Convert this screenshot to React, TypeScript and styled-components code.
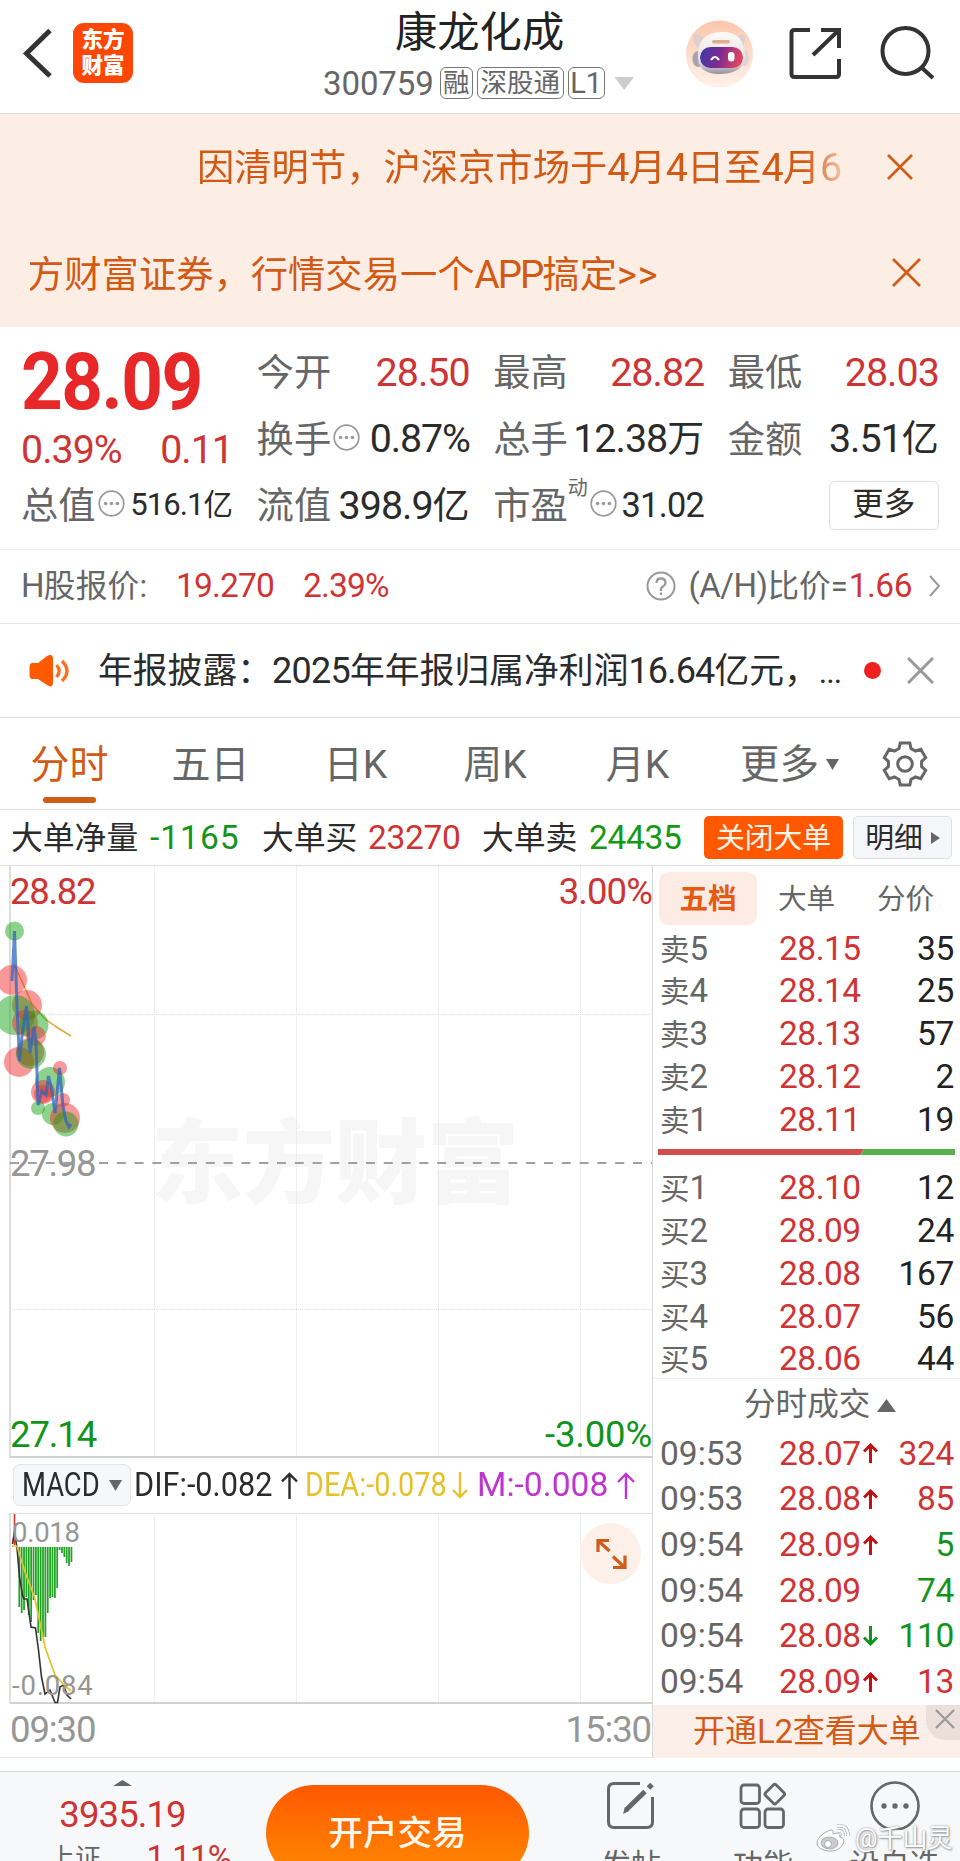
import React from "react";
import styled, { createGlobalStyle } from "styled-components";

const RED = "#cf3434";
const GREEN = "#12941a";
const INK = "#2b2b2b";
const GREY = "#666";
const ORANGE = "#d35a14";
const LINE = "#dcdfe0";

const GlobalStyle = createGlobalStyle`
  html, body { margin: 0; padding: 0; background: #fff; }
  * { box-sizing: border-box; }
  svg { flex: none; }
  body { font-family: Roboto, "Noto Sans CJK SC", sans-serif; color: ${INK}; }
`;

const Screen = styled.div`
  width: 960px;
  height: 1861px;
  overflow: hidden;
  background: #fff;
  display: flex;
  flex-direction: column;
  white-space: nowrap;
  line-height: 1;
`;

const Num = styled.span<{ $size: number; $color?: string; $ls?: number; $weight?: number }>`
  font-size: ${(p) => p.$size}px;
  color: ${(p) => p.$color ?? "inherit"};
  letter-spacing: ${(p) => p.$ls ?? -0.025}em;
  font-weight: ${(p) => p.$weight ?? 400};
`;

/* ---------- header ---------- */
const Header = styled.header`
  height: 114px;
  flex: none;
  border-bottom: 1px solid #dadada;
  display: grid;
  grid-template-columns: 73px 61px 552px 68px 103px 103px;
`;
const HeaderCell = styled.div<{ $pt?: number }>`
  display: flex;
  align-items: flex-start;
  padding-top: ${(p) => p.$pt ?? 0}px;
`;
const Logo = styled.div`
  width: 60px;
  height: 60px;
  margin-top: 23px;
  border-radius: 11px;
  background: #ff4704;
  color: #fff;
  font-size: 21.5px;
  font-weight: 900;
  line-height: 26px;
  padding-top: 4px;
  text-align: center;
  white-space: normal;
`;
const TitleBlock = styled.div`
  padding-left: 189px;
`;
const StockName = styled.h1`
  margin: 10px 0 0 72px;
  font-size: 42.3px;
  line-height: 46px;
  font-weight: 400;
  color: #222;
`;
const CodeRow = styled.div`
  display: flex;
  align-items: center;
  margin-top: 10px;
  height: 34px;
  color: ${GREY};
`;
const Tag = styled.span<{ $w: number; $ml: number }>`
  width: ${(p) => p.$w}px;
  margin-left: ${(p) => p.$ml}px;
  height: 32px;
  line-height: 30px;
  border: 1.4px solid #777;
  border-radius: 6px;
  font-size: 26.5px;
  text-align: center;
`;

/* ---------- banners ---------- */
const Banners = styled.section`
  height: 213px;
  flex: none;
  background: #fceee5;
  color: ${ORANGE};
  font-size: 37.3px;
`;
const Banner = styled.div<{ $h: number; $left: number }>`
  height: ${(p) => p.$h}px;
  padding-left: ${(p) => p.$left}px;
  padding-top: 3px;
  display: flex;
  align-items: center;
`;
const Marquee = styled.div<{ $w: number; $fade?: boolean; $shift?: number }>`
  width: ${(p) => p.$w}px;
  overflow: hidden;
  line-height: 50px;
  text-indent: ${(p) => p.$shift ?? 0}px;
  mask-image: ${(p) =>
    p.$fade ? "linear-gradient(90deg,#000 calc(100% - 46px),transparent calc(100% + 6px))" : "none"};
`;
const BannerClose = styled.span<{ $ml: number }>`
  margin-left: ${(p) => p.$ml}px;
`;

/* ---------- quote ---------- */
const Quote = styled.section`
  height: 223px;
  flex: none;
  border-bottom: 1px solid #ececec;
  padding: 12px 21px 0 21px;
  display: grid;
  grid-template-columns: 212px 213px 211px 211px;
  column-gap: 23.6px;
`;
const QuoteCol = styled.div`
  display: flex;
  flex-direction: column;
`;
const QuoteRow = styled.div<{ $h?: number }>`
  height: ${(p) => p.$h ?? 66.6}px;
  display: flex;
  align-items: center;
  justify-content: space-between;
  font-size: 37px;
  color: ${INK};
`;
const BigPrice = styled.strong`
  font-size: 80px;
  font-weight: 700;
  color: #e82828;
  letter-spacing: -0.02em;
  transform: scaleX(0.91);
  transform-origin: left;
`;
const Label = styled.span`
  font-size: 37.3px;
  color: ${GREY};
  display: flex;
  align-items: center;
  padding-top: 3px;
`;
const Sup = styled.sup`
  font-size: 20px;
  line-height: 20px;
  align-self: flex-start;
  margin: -10px 0 0 0;
`;
const Cap = styled.span`
  font-size: 29.5px;
`;
const MoreButton = styled.button`
  margin-left: auto;
  width: 110px;
  height: 49px;
  border: 1.3px solid #e0e0e0;
  border-radius: 6px;
  background: #fff;
  font: 400 31.5px/44px Roboto, "Noto Sans CJK SC", sans-serif;
  color: ${INK};
  padding: 0;
`;

const HRow = styled.section`
  height: 74px;
  flex: none;
  border-bottom: 1px solid #e8e8e8;
  display: flex;
  align-items: center;
  padding: 0 19px 1px 21px;
  font-size: 31.6px;
  color: ${GREY};
`;
const HLabel = styled.span`
  width: 155px;
  letter-spacing: 0.01em;
`;
const HChange = styled.span`
  margin-left: 29px;
`;
const Push = styled.span`
  margin-left: auto;
  display: flex;
  align-items: center;
`;
const Ratio = styled.span`
  margin: 0 1px 0 12px;
`;
const News = styled.section`
  height: 94px;
  flex: none;
  border-bottom: 1px solid #dcdcdc;
  display: flex;
  align-items: center;
  padding-left: 29px;
  font-size: 34.8px;
`;
const NewsText = styled.span`
  width: 746px;
  margin-left: 28px;
`;
const Dot = styled.i`
  width: 17px;
  height: 17px;
  border-radius: 50%;
  background: #ee2020;
  margin: 0 26px 0 20px;
`;

/* ---------- tabs ---------- */
const Tabs = styled.nav`
  height: 92px;
  flex: none;
  border-bottom: 1px solid ${LINE};
  display: grid;
  grid-template-columns: 139px 143px 147px 132px 153px 136px 110px;
`;
const Tab = styled.div<{ $active?: boolean }>`
  display: flex;
  flex-direction: column;
  align-items: center;
  font-size: 39px;
  line-height: 56px;
  padding-top: 19px;
  color: ${(p) => (p.$active ? ORANGE : GREY)};
  &::after {
    content: "";
    width: 53px;
    height: 5.5px;
    border-radius: 3px;
    margin-top: 4px;
    background: ${(p) => (p.$active ? ORANGE : "transparent")};
  }
`;
const MoreTab = styled.div`
  display: flex;
  align-items: center;
  font-size: 39.5px;
  line-height: 56px;
  color: ${GREY};
  padding: 2px 0 0 26px;
  gap: 7px;
`;
const Center = styled.div`
  display: flex;
  align-items: center;
  justify-content: center;
`;

const BigOrders = styled.section`
  height: 56px;
  flex: none;
  border-bottom: 1px solid ${LINE};
  display: grid;
  align-items: center;
  grid-template-columns: 139px 112px 106px 114px 107px 115px 149px 99px;
  padding-left: 11px;
  font-size: 31.8px;
`;
const OrderLabel = styled.span`
  padding-top: 3px;
`;
const OrderValue = styled(Num)`
  padding-top: 1px;
`;
const SmallButton = styled.button<{ $primary?: boolean }>`
  width: ${(p) => (p.$primary ? 139 : 99)}px;
  height: 43px;
  border-radius: 5px;
  padding: 1px 0 0;
  display: flex;
  align-items: center;
  justify-content: center;
  gap: 8px;
  border: ${(p) => (p.$primary ? "0" : "1px solid #dcdfe3")};
  background: ${(p) => (p.$primary ? "#ff5800" : "#f5f6f9")};
  color: ${(p) => (p.$primary ? "#fff4e8" : INK)};
  font: 400 28.8px/40px Roboto, "Noto Sans CJK SC", sans-serif;
`;

/* ---------- main ---------- */
const Main = styled.main`
  height: 892px;
  flex: none;
  display: grid;
  grid-template-columns: 653px 307px;
  border-bottom: 1px solid #e6e6e6;
`;
const ChartSide = styled.div`
  border-right: 1px solid #d8d8d8;
  display: flex;
  flex-direction: column;
`;
const Plot = styled.div<{ $h: number }>`
  height: ${(p) => p.$h}px;
  flex: none;
  display: grid;
  & > * { grid-area: 1 / 1; }
`;
const PlotLabels = styled.div<{ $pad: string }>`
  z-index: 1;
  display: flex;
  flex-direction: column;
  justify-content: space-between;
  padding: ${(p) => p.$pad};
`;
const PlotLine = styled.div`
  display: flex;
  justify-content: space-between;
  line-height: 36px;
`;
const Watermark = styled.div`
  align-self: start;
  margin: 244px 0 0 151px;
  font-size: 92px;
  line-height: 110px;
  font-weight: 900;
  color: #f6f6f6;
`;
const MacdRow = styled.div`
  height: 55px;
  flex: none;
  display: grid;
  align-items: center;
  grid-template-columns: 121px 147px 24px 147px 25px 140px 1fr;
  padding: 0 0 1px 13px;
`;
const MacdPicker = styled.div`
  width: 118px;
  height: 42px;
  border: 1px solid #e2e4e8;
  border-radius: 7px;
  background: #f6f7f9;
  display: flex;
  align-items: center;
  padding-left: 8px;
`;
const Squeeze = styled.span<{ $k: number; $w?: number; $color?: string }>`
  display: inline-block;
  width: ${(p) => (p.$w ? p.$w + "px" : "auto")};
  font-size: 33px;
  line-height: 40px;
  color: ${(p) => p.$color ?? INK};
  transform: scaleX(${(p) => p.$k});
  transform-origin: left;
`;
const TimeRow = styled.div`
  height: 53px;
  display: flex;
  align-items: center;
  justify-content: space-between;
  padding: 0 1px 0 10px;
  color: #969696;
`;
const ExpandButton = styled.div`
  z-index: 1;
  width: 61px;
  height: 61px;
  border-radius: 50%;
  background: #fdf0e8;
  margin: 10px 0 0 580px;
  display: flex;
  align-items: center;
  justify-content: center;
`;

/* ---------- order book ---------- */
const BookSide = styled.div`
  display: flex;
  flex-direction: column;
`;
const BookTabs = styled.div`
  height: 61px;
  flex: none;
  display: grid;
  grid-template-columns: 98px 99px 99px;
  padding: 6px 0 0 6px;
`;
const BookTab = styled.div<{ $active?: boolean }>`
  height: 53px;
  line-height: 54px;
  border-radius: 9px;
  text-align: center;
  font-size: 28.6px;
  font-weight: ${(p) => (p.$active ? 700 : 400)};
  color: ${(p) => (p.$active ? "#e65a12" : GREY)};
  background: ${(p) => (p.$active ? "#fdece3" : "transparent")};
`;
const BookRow = styled.div<{ $h: number }>`
  height: ${(p) => p.$h}px;
  flex: none;
  display: grid;
  align-items: center;
  grid-template-columns: 119px 84px 1fr;
  padding: 0 6px 0 7px;
  font-size: 29.5px;
  color: ${GREY};
`;
const Qty = styled.span<{ $color?: string }>`
  text-align: right;
  font-size: 33.5px;
  letter-spacing: -0.01em;
  color: ${(p) => p.$color ?? "#222"};
`;
const TickPrice = styled.span`
  display: flex;
  align-items: center;
  gap: 2px;
`;
const RatioBar = styled.svg`
  flex: none;
  margin: 8px 0 12px 5px;
  display: block;
`;
const TicksTitle = styled.div`
  height: 53px;
  flex: none;
  border-top: 1px solid #eee;
  margin-top: -3px;
  padding: 1px 0 0 91px;
  display: flex;
  align-items: center;
  gap: 7px;
  font-size: 31.6px;
  color: ${GREY};
`;
const L2Bar = styled.div`
  height: 53px;
  margin-top: auto;
  background: #fceee8;
  color: ${ORANGE};
  font-size: 32px;
  display: flex;
  align-items: center;
  padding-left: 40px;
`;
const L2Close = styled.span`
  width: 34px;
  height: 35px;
  align-self: flex-start;
  margin-left: auto;
  padding: 0 0 6px 4px;
  background: #ebdfd9;
  border-radius: 0 0 0 20px;
  display: flex;
  align-items: center;
  justify-content: center;
`;

/* ---------- bottom bar ---------- */
const BottomBar = styled.footer`
  position: relative;
  margin-top: 13px;
  height: 120px;
  flex: none;
  border-top: 1px solid #d6d8da;
  background: #f7f8fa;
  display: grid;
  grid-template-columns: 266px 263px 204px 60px 167px;
`;
const IndexCell = styled.div`
  display: flex;
  flex-direction: column;
  align-items: center;
  padding: 8px 21px 0 0;
`;
const IndexValue = styled.span`
  margin-top: 11px;
  font-size: 36.5px;
  letter-spacing: -0.025em;
  color: ${RED};
`;
const IndexRow = styled.div`
  display: flex;
  align-items: center;
  justify-content: space-between;
  width: 182px;
  height: 32px;
  margin: 8px 0 0 35px;
  font-size: 26px;
  color: ${GREY};
`;
const TradeButton = styled.button`
  width: 263px;
  height: 96px;
  margin-top: 13px;
  border: 0;
  border-radius: 48px;
  background: linear-gradient(#ff5800, #ff8c00);
  color: #fff8ec;
  font: 500 34.6px/40px Roboto, "Noto Sans CJK SC", sans-serif;
`;
const Action = styled.div<{ $pl?: number }>`
  display: flex;
  flex-direction: column;
  align-items: center;
  padding: 8px 0 0 ${(p) => p.$pl ?? 0}px;
  font-size: 30px;
  line-height: 36px;
  gap: 17px;
  color: ${GREY};
`;
const Credit = styled.div`
  position: absolute;
  left: 815px;
  top: 50px;
  display: flex;
  align-items: center;
  gap: 4px;
  font-size: 25px;
  line-height: 34px;
  color: #fff;
  text-shadow: 0 0 2px #8a8a8a, 1px 1px 2px #999;
`;

const Cross = ({ s, c, w = 2.6 }: { s: number; c: string; w?: number }) => (
  <svg width={s} height={s} viewBox={`0 0 ${s} ${s}`} stroke={c} strokeWidth={w}>
    <path d={`M1 1L${s - 1} ${s - 1}M${s - 1} 1L1 ${s - 1}`} />
  </svg>
);
const Tri = ({ w, h, c, dir }: { w: number; h: number; c: string; dir: "up" | "down" | "right" }) => (
  <svg width={w} height={h} fill={c}>
    <path
      d={
        dir === "up" ? `M0 ${h}L${w / 2} 0L${w} ${h}z` : dir === "down" ? `M0 0H${w}L${w / 2} ${h}z` : `M0 0L${w} ${h / 2}L0 ${h}z`
      }
    />
  </svg>
);
const InfoIcon = styled.svg`
  margin: -6px 0 0 2px;
`;
const Info = () => (
  <InfoIcon width="27" height="27" viewBox="0 0 27 27">
    <circle cx="13.5" cy="13.5" r="12.3" fill="none" stroke="#999" strokeWidth="1.7" />
    <g fill="#999">
      <circle cx="7.6" cy="13.5" r="1.8" />
      <circle cx="13.5" cy="13.5" r="1.8" />
      <circle cx="19.4" cy="13.5" r="1.8" />
    </g>
  </InfoIcon>
);
const Chevron = styled.svg`
  margin-left: 17px;
`;
const Arrow = ({ w, h, c, sw, down }: { w: number; h: number; c: string; sw: number; down?: boolean }) => (
  <svg width={w} height={h} fill="none" stroke={c} strokeWidth={sw}>
    <g transform={down ? `rotate(180 ${w / 2} ${h / 2})` : undefined}>
      <path d={`M${w / 2} ${h}V2M1 ${w / 2 + 1}L${w / 2} 2L${w - 1} ${w / 2 + 1}`} />
    </g>
  </svg>
);

const Robot = () => (
  <svg width="68" height="68" viewBox="0 0 68 68">
    <defs>
      <linearGradient id="halo" x1="0" y1="0" x2="0" y2="1">
        <stop offset="0" stopColor="#fcc7ab" />
        <stop offset="1" stopColor="#fff1ea" />
      </linearGradient>
      <linearGradient id="visor" x1="0" y1="0" x2="1" y2="0.15">
        <stop offset="0" stopColor="#3b3aa8" />
        <stop offset="0.5" stopColor="#7d2a93" />
        <stop offset="1" stopColor="#e0455f" />
      </linearGradient>
      <linearGradient id="shell" x1="0" y1="0" x2="0" y2="1">
        <stop offset="0" stopColor="#fffaf7" />
        <stop offset="0.7" stopColor="#e4e0e4" />
        <stop offset="1" stopColor="#96939f" />
      </linearGradient>
    </defs>
    <circle cx="33.500" cy="34" r="33.500" fill="url(#halo)" />
    <ellipse cx="12" cy="39" rx="5.500" ry="8" fill="#a9a3af" />
    <ellipse cx="59" cy="38" rx="4" ry="8" fill="#ded4d8" />
    <path d="M8 15q3-3 8 2l4 5-8 6q-6-5-4-13zM53 15q6-2 6 4l-2 10-9-6z" fill="#dccfcd" />
    <path d="M12 35Q12 13 35 12T59 35Q59 53 35 54T12 35z" fill="url(#shell)" />
    <rect x="26" y="20" width="18" height="3.500" rx="1.700" fill="#dfae8e" />
    <rect x="14" y="27" width="43" height="21" rx="10.500" fill="url(#visor)" />
    <path d="M25 40q4-6 8 0" stroke="#fff" strokeWidth="2.200" fill="none" />
    <rect x="42" y="32" width="6.500" height="9.500" rx="3" fill="#fff" />
  </svg>
);

const asks = [["卖5", "28.15", "35"], ["卖4", "28.14", "25"], ["卖3", "28.13", "57"], ["卖2", "28.12", "2"], ["卖1", "28.11", "19"]];
const bids = [["买1", "28.10", "12"], ["买2", "28.09", "24"], ["买3", "28.08", "167"], ["买4", "28.07", "56"], ["买5", "28.06", "44"]];
const ticks: [string, string, string, string, string][] = [
  ["09:53", "28.07", "up", "324", RED],
  ["09:53", "28.08", "up", "85", RED],
  ["09:54", "28.09", "up", "5", GREEN],
  ["09:54", "28.09", "", "74", GREEN],
  ["09:54", "28.08", "down", "110", GREEN],
  ["09:54", "28.09", "up", "13", RED],
];
const bubbles: [number, number, number, "r" | "g"][] = [
  [14.5, 65, 9.5, "g"], [12, 114, 15, "r"], [27, 139, 15, "r"], [15, 149, 20, "g"], [25, 157, 13, "r"],
  [34, 159, 14.5, "g"], [36, 170, 10, "r"], [19, 196, 15, "r"], [30, 186, 14, "r"], [31, 188, 15, "g"],
  [50, 216, 15, "g"], [60, 202, 7, "r"], [43, 226, 12, "r"], [43, 228, 9, "r"], [38, 242, 7, "g"],
  [53, 248, 11, "g"], [63, 234, 7, "r"], [65, 252, 15, "r"], [66, 258, 12.5, "g"],
];
const macdBars = [107, 113, 110, 97, 115, 122, 100, 95, 133, 141, 137, 137, 113, 98, 97, 98, 88, 50, 53, 57, 63, 66, 62];
const gridX = [154.5, 296.5, 438.5, 580.5];

const BookRows = ({ rows }: { rows: string[][] }) => (
  <>
    {rows.map(([n, p, q]) => (
      <BookRow key={n} $h={42.75}>
        <span>{n[0]}<Num $size={33} $ls={0}>{n[1]}</Num></span>
        <Num $size={33.5} $color={RED} $ls={-0.015}>{p}</Num>
        <Qty>{q}</Qty>
      </BookRow>
    ))}
  </>
);

export default function App() {
  return (
    <Screen>
      <GlobalStyle />
      <Header>
        <HeaderCell>
          <svg width="73" height="100" fill="none" stroke="#333" strokeWidth="5">
            <path d="M50 30.500L26.500 53.500L50 76" />
          </svg>
        </HeaderCell>
        <Logo>东方<br />财富</Logo>
        <TitleBlock>
          <StockName>康龙化成</StockName>
          <CodeRow>
            <Num $size={33} $ls={-0.003}>300759</Num>
            <Tag $w={33} $ml={6}>融</Tag>
            <Tag $w={87} $ml={4}>深股通</Tag>
            <Tag $w={37} $ml={4}><Num $size={29} $ls={0}>L1</Num></Tag>
            <svg width="30" height="20"><path d="M9.500 4H29L19.200 17z" fill="#ccc" /></svg>
          </CodeRow>
        </TitleBlock>
        <HeaderCell $pt={20}><Robot /></HeaderCell>
        <HeaderCell>
          <svg width="103" height="100" fill="none" stroke="#333" strokeWidth="4">
            <path d="M56 30H40.500Q37.500 30 37.500 33V74Q37.500 77 40.500 77H82Q85 77 85 74V59M67 30H85V48M85 30L59 55" />
          </svg>
        </HeaderCell>
        <HeaderCell>
          <svg width="103" height="100" fill="none" stroke="#333" strokeWidth="4">
            <circle cx="48.500" cy="51" r="23" />
            <path d="M64.500 67.500L76 78" />
          </svg>
        </HeaderCell>
      </Header>

      <Banners>
        <Banner $h={104} $left={197}>
          <Marquee $w={654} $fade>
            因清明节，沪深京市场于<Num $size={39.4}>4</Num>月<Num $size={39.4}>4</Num>日至<Num $size={39.4}>4</Num>月<Num $size={39.4}>6</Num>
          </Marquee>
          <BannerClose $ml={36}><Cross s={26} c={ORANGE} /></BannerClose>
        </Banner>
        <Banner $h={110} $left={30}>
          <Marquee $w={820} $shift={-3}>
            方财富证券，行情交易一个<Num $size={38.5} $ls={-0.05}>APP</Num>搞定<Num $size={38} $ls={0.02}>&gt;&gt;</Num>
          </Marquee>
          <BannerClose $ml={42}><Cross s={29} c={ORANGE} /></BannerClose>
        </Banner>
      </Banners>

      <Quote>
        <QuoteCol>
          <QuoteRow $h={86}><BigPrice>28.09</BigPrice></QuoteRow>
          <QuoteRow $h={50}>
            <Num $size={39.4} $color={RED}>0.39%</Num>
            <Num $size={39.4} $color={RED}>0.11</Num>
          </QuoteRow>
          <QuoteRow $h={60}>
            <Label>总值<Info /></Label>
            <Cap><Num $size={31} $ls={-0.03}>516.1</Num>亿</Cap>
          </QuoteRow>
        </QuoteCol>
        <QuoteCol>
          <QuoteRow><Label>今开</Label><Num $size={39.4} $color={RED}>28.50</Num></QuoteRow>
          <QuoteRow><Label>换手<Info /></Label><Num $size={39.4} $ls={-0.03}>0.87%</Num></QuoteRow>
          <QuoteRow><Label>流值</Label><span><Num $size={39.4}>398.9</Num>亿</span></QuoteRow>
        </QuoteCol>
        <QuoteCol>
          <QuoteRow><Label>最高</Label><Num $size={39.4} $color={RED}>28.82</Num></QuoteRow>
          <QuoteRow><Label>总手</Label><span><Num $size={39.4}>12.38</Num>万</span></QuoteRow>
          <QuoteRow><Label>市盈<Sup>动</Sup><Info /></Label><Num $size={34.3} $ls={-0.02}>31.02</Num></QuoteRow>
        </QuoteCol>
        <QuoteCol>
          <QuoteRow><Label>最低</Label><Num $size={39.4} $color={RED}>28.03</Num></QuoteRow>
          <QuoteRow><Label>金额</Label><span><Num $size={39.4}>3.51</Num>亿</span></QuoteRow>
          <QuoteRow><MoreButton>更多</MoreButton></QuoteRow>
        </QuoteCol>
      </Quote>

      <HRow>
        <HLabel><Num $size={33}>H</Num>股报价:</HLabel>
        <Num $size={33.5} $color={RED} $ls={-0.025}>19.270</Num>
        <HChange><Num $size={33.5} $color={RED}>2.39%</Num></HChange>
        <Push>
          <svg width="30" height="30" fill="none" stroke="#999" strokeWidth="2">
            <circle cx="15" cy="15" r="13.500" />
            <path d="M10.500 12Q10.500 7.500 15 7.500T19.500 12Q19.500 14 17 15.500T15 19V20M15 21.500V24" strokeWidth="2.300" />
          </svg>
          <Ratio><Num $size={33} $ls={-0.015}>(A/H)</Num>比价<Num $size={31} $ls={0}>=</Num></Ratio>
          <Num $size={33.5} $color={RED} $ls={-0.015}>1.66</Num>
          <Chevron width="12" height="22" fill="none" stroke="#999" strokeWidth="2"><path d="M1 1L10 11L1 21" /></Chevron>
        </Push>
      </HRow>

      <News>
        <svg width="41" height="34" viewBox="0 0 41 34">
          <path d="M3.500 9H9L18 2Q24-1 24 5V28Q24 35 18 31L9 25H3.500Q.5 25 .5 21V13Q.5 9 3.500 9z" fill="#ff5a00" />
          <path d="M27.500 11Q33 17 27.500 23M33 7Q43 17 33 27" stroke="#ff6d1c" strokeWidth="3.200" fill="none" />
        </svg>
        <NewsText>年报披露：<Num $size={36} $ls={-0.02}>2025</Num>年年报归属净利润<Num $size={36} $ls={-0.025}>16.64</Num>亿元，<Num $size={32} $ls={-0.03}>...</Num></NewsText>
        <Dot />
        <Cross s={27} c="#999" w={3} />
      </News>

      <Tabs>
        <Tab $active>分时</Tab>
        <Tab>五日</Tab>
        <Tab>日K</Tab>
        <Tab>周K</Tab>
        <Tab>月K</Tab>
        <MoreTab>更多<Tri w={13} h={11} c={GREY} dir="down" /></MoreTab>
        <Center>
          <svg width="48" height="48" viewBox="-24 -24 48 48" fill="none" stroke={GREY} strokeWidth="3">
            <path d="M-4.800-21H4.800L6-15.500L10.500-13L15.800-14.700L20.700-6.300L16.600-2.600V2.600L20.700 6.300L15.800 14.700L10.500 13L6 15.500L4.800 21H-4.800L-6 15.500L-10.500 13L-15.800 14.700L-20.700 6.300L-16.600 2.600V-2.600L-20.700-6.300L-15.800-14.700L-10.500-13L-6-15.500z" />
            <circle r="7.300" />
          </svg>
        </Center>
      </Tabs>

      <BigOrders>
        <OrderLabel>大单净量</OrderLabel><OrderValue $size={33.5} $color={GREEN} $ls={0.03}>-1165</OrderValue>
        <OrderLabel>大单买</OrderLabel><OrderValue $size={33.5} $color={RED} $ls={-0.01}>23270</OrderValue>
        <OrderLabel>大单卖</OrderLabel><OrderValue $size={33.5} $color="#129a12" $ls={-0.01}>24435</OrderValue>
        <SmallButton $primary>关闭大单</SmallButton>
        <SmallButton>明细<Tri w={9} h={12} c={GREY} dir="right" /></SmallButton>
      </BigOrders>

      <Main>
        <ChartSide>
          <Plot $h={592}>
            <Watermark>东方财富</Watermark>
            <svg width="652" height="592" fill="none">
              <g stroke="#dde1e3" strokeWidth="1" strokeDasharray="1 1">
                {gridX.map((x) => <path key={x} d={`M${x} 0V591`} />)}
                <path d="M10 148.500H652M10 443.500H652" />
              </g>
              <path d="M10 0V592" stroke="#dedede" strokeWidth="2" />
              <path d="M10 591H652" stroke="#d2d2d2" strokeWidth="2" />
              <path d="M10 297H652" stroke="#a0a0a0" strokeWidth="2" strokeDasharray="9 8.800" />
              <path d="M14 98L24 120L32 138L45 153L58 162L71 170" stroke="#e0a838" strokeWidth="1.500" />
              {bubbles.map(([x, y, r, k], i) => (
                <circle key={i} cx={x} cy={y} r={r} fill={k === "r" ? "#f02828" : "#10a010"} fillOpacity={0.48} />
              ))}
              <path d="M12 115L14.500 65L17 140L19.500 195L22 170L26.500 140L30 187L34 161L36 175L38 239L42 225L46 229L48.500 210L52 225L55 247L59.500 202L63 240L66 255L69 261L71 258" stroke="#2f64c0" strokeOpacity="0.75" strokeWidth="3" />
            </svg>
            <PlotLabels $pad="8px 0 5px 10px">
              <PlotLine><Num $size={36.5} $color={RED} $ls={-0.035}>28.82</Num><Num $size={36.5} $color={RED} $ls={-0.025}>3.00%</Num></PlotLine>
              <PlotLine><Num $size={36.5} $color="#969696" $ls={-0.035}>27.98</Num></PlotLine>
              <PlotLine><Num $size={36.5} $color={GREEN} $ls={-0.03}>27.14</Num><Num $size={36.5} $color={GREEN} $ls={-0.005}>-3.00%</Num></PlotLine>
            </PlotLabels>
          </Plot>
          <MacdRow>
            <MacdPicker><Squeeze $k={0.83} $w={87}>MACD</Squeeze><Tri w={13} h={11} c={GREY} dir="down" /></MacdPicker>
            <Squeeze $k={0.93}>DIF:-0.082</Squeeze><Arrow w={17} h={27} c={INK} sw={2.4} />
            <Squeeze $k={0.875} $color="#e6c12c">DEA:-0.078</Squeeze><Arrow w={16} h={27} c="#e6c12c" sw={2.4} down />
            <Squeeze $k={1.02} $color="#c035cf">M:-0.008</Squeeze><Arrow w={18} h={27} c="#c035cf" sw={2.4} />
          </MacdRow>
          <Plot $h={191}>
            <svg width="652" height="191" fill="none">
              <g stroke="#dde1e3" strokeWidth="1" strokeDasharray="1 1">
                {gridX.map((x) => <path key={x} d={`M${x} 0V190`} />)}
              </g>
              <path d="M10 .5H652" stroke="#dedede" />
              <path d="M10 0V190" stroke="#dedede" strokeWidth="2" />
              <path d="M10 190H652" stroke="#d2d2d2" strokeWidth="2" />
              <g stroke="#1fa222" strokeWidth="1.750">
                {macdBars.map((v, i) => <path key={i} d={`M${19.3 + i * 2.37} 34V${v - 13}`} />)}
              </g>
              <path d="M14.500 1V32" stroke="#e03030" strokeWidth="1.600" />
              <path d="M12.500 31L14.500 18L17 35L19.500 64L22.500 82L24 86H27L31 114L35.500 115L38.500 137L41.500 164L45 181L50 177L55 189.500H57.500L60 174L63.500 172L67 182L71 186" stroke="#333" strokeWidth="1.600" />
              <path d="M12 33L17 33L25 59L34.500 84L40 110L45 134L55 162L63 171L71 178" stroke="#e3c22a" strokeWidth="1.700" />
            </svg>
            <PlotLabels $pad="2px 0 0 12px">
              <PlotLine><Num $size={27.5} $color="#969696" $ls={-0.01}>0.018</Num></PlotLine>
              <PlotLine><Num $size={27.5} $color="#969696" $ls={0.03}>-0.084</Num></PlotLine>
            </PlotLabels>
            <ExpandButton>
              <svg width="34" height="34" fill="none" stroke="#cf5c18" strokeWidth="3.200">
                <path d="M15 3.500H4V15M4.500 4L15.500 14M19 19.500L30 30M31 18.500V30.500H19" />
              </svg>
            </ExpandButton>
          </Plot>
          <TimeRow><Num $size={36.5} $ls={-0.03}>09:30</Num><Num $size={36.5} $ls={-0.03}>15:30</Num></TimeRow>
        </ChartSide>

        <BookSide>
          <BookTabs>
            <BookTab $active>五档</BookTab>
            <BookTab>大单</BookTab>
            <BookTab>分价</BookTab>
          </BookTabs>
          <BookRows rows={asks} />
          <RatioBar width="297" height="6">
            <path d="M0 0H206L202 6H0z" fill="#d44c4c" />
            <path d="M206 0H297V6H202z" fill="#5cb04c" />
          </RatioBar>
          <BookRows rows={bids} />
          <TicksTitle>分时成交<Tri w={19} h={13} c={GREY} dir="up" /></TicksTitle>
          {ticks.map(([t, p, d, q, c], i) => (
            <BookRow key={i} $h={45.7}>
              <Num $size={33.5} $ls={0}>{t}</Num>
              <TickPrice>
                <Num $size={33.5} $color={RED} $ls={-0.015}>{p}</Num>
                {d && <Arrow w={15} h={20} c={d === "up" ? "#c01010" : GREEN} sw={3} down={d === "down"} />}
              </TickPrice>
              <Qty $color={c}>{q}</Qty>
            </BookRow>
          ))}
          <L2Bar>开通<Num $size={33} $ls={-0.01}>L2</Num>查看大单<L2Close><Cross s={20} c="#999" w={2.2} /></L2Close></L2Bar>
        </BookSide>
      </Main>

      <BottomBar>
        <IndexCell>
          <Tri w={19} h={6} c={GREY} dir="up" />
          <IndexValue>3935.19</IndexValue>
          <IndexRow><span>上证</span><Num $size={33} $color={RED}>1.11%</Num></IndexRow>
        </IndexCell>
        <TradeButton>开户交易</TradeButton>
        <Action>
          <svg width="50" height="50" viewBox="0 0 50 50" fill="none" stroke={GREY} strokeWidth="3">
            <path d="M34 3.500H8Q2.500 3.500 2.500 9V42Q2.500 47.500 8 47.500H41Q46.500 47.500 46.500 42V17" />
            <path d="M20 30L39 11.500M42.500 8L46 4.500" strokeWidth="5" />
            <path d="M17 34L19 27L23 31z" fill={GREY} stroke="none" />
          </svg>
          <span>发帖</span>
        </Action>
        <Action>
          <svg width="50" height="50" viewBox="0 0 50 50" fill="none" stroke={GREY} strokeWidth="2.800">
            <rect x="3" y="5" width="18.500" height="18.500" rx="3" />
            <rect x="3" y="29" width="18.500" height="18.500" rx="3" />
            <rect x="27" y="29" width="18.500" height="18.500" rx="3" />
            <rect x="29.300" y="6.600" width="15" height="15" rx="2" transform="rotate(45 36.800 14.100)" />
          </svg>
          <span>功能</span>
        </Action>
        <Action $pl={36}>
          <svg width="50" height="50" viewBox="0 0 50 50">
            <circle cx="25" cy="26" r="23.500" fill="none" stroke={GREY} strokeWidth="2.600" />
            <g fill={GREY}><circle cx="14" cy="26" r="2.700" /><circle cx="25" cy="26" r="2.700" /><circle cx="36" cy="26" r="2.700" /></g>
          </svg>
          <span>设自选</span>
        </Action>
        <Credit>
          <svg width="36" height="32" viewBox="0 0 36 32" fill="none" stroke="#aaa" strokeWidth="1">
            <path d="M13 8Q19 5 18 11Q26 8 25 14Q31 16 28 21Q24 29 13 28Q1 26 2 19Q4 12 13 8z" fill="#fff" />
            <ellipse cx="14.500" cy="20" rx="8.500" ry="6" fill="#ccc" />
            <circle cx="13" cy="21" r="3.500" fill="#fff" />
            <path d="M22 3Q33 1 33 13M23 8Q28 7 28 13" stroke="#aaa" strokeWidth="3.500" />
            <path d="M22 3Q33 1 33 13M23 8Q28 7 28 13" stroke="#fff" strokeWidth="2.200" />
          </svg>
          <span>@千山灵</span>
        </Credit>
      </BottomBar>
    </Screen>
  );
}
